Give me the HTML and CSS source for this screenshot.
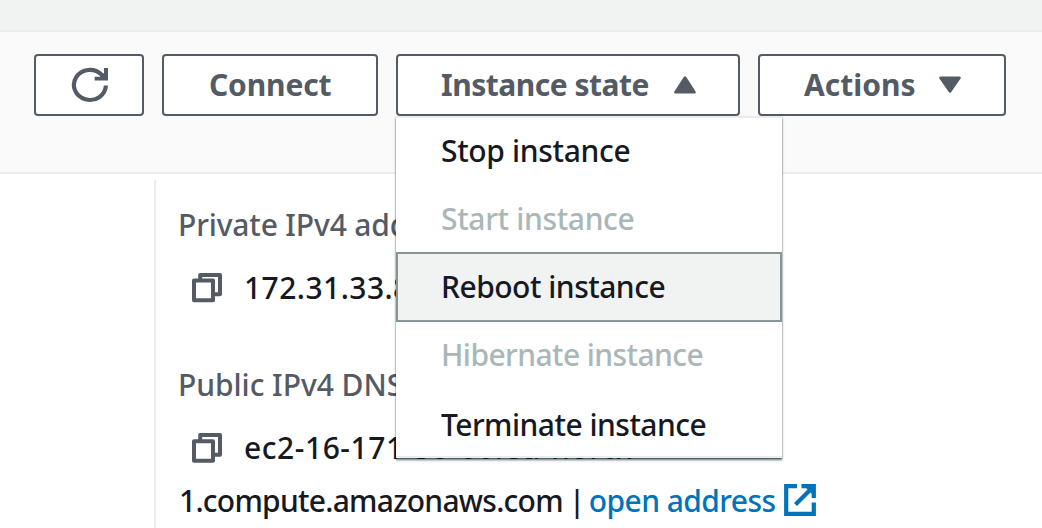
FILE: index.html
```html
<!DOCTYPE html>
<html lang="en">
<head>
<meta charset="utf-8">
<title>Instance summary</title>
<link rel="stylesheet" href="styles.css">
</head>
<body>
<div class="topband"></div>
<header class="toolbar">
  <button class="btn btn-refresh" aria-label="Refresh">
    <svg width="38" height="36" viewBox="0 0 38 36" fill="none" stroke="currentColor" stroke-width="4.2"><path d="M34.9 18.5A16 15 0 1 1 30.4 7.5L34 11"/><path d="M37 1V13.6H23.6V9.8H29L33 6V1Z" fill="currentColor" stroke="none"/></svg>
  </button>
  <button class="btn btn-connect"><span class="t-connect">Connect</span></button>
  <div class="dropdown">
    <button class="btn btn-state"><span class="t-state">Instance state</span>
      <svg class="caret" width="24" height="20" viewBox="0 0 24 20"><path d="M12 2.5 21.5 17.2H2.5Z" fill="currentColor" stroke="currentColor" stroke-width="2.6" stroke-linejoin="round"/></svg>
    </button>
    <ul class="menu">
      <li class="item item-stop"><span class="t-stop">Stop instance</span></li>
      <li class="item item-start disabled"><span class="t-start">Start instance</span></li>
      <li class="item active"><span class="t-reboot">Reboot instance</span></li>
      <li class="item item-hib disabled"><span class="t-hib">Hibernate instance</span></li>
      <li class="item item-term"><span class="t-term">Terminate instance</span></li>
    </ul>
  </div>
  <button class="btn btn-actions"><span class="t-actions">Actions</span>
    <svg class="caret" width="24" height="20" viewBox="0 0 24 20"><path d="M12 16.5 21.5 2.8H2.5Z" fill="currentColor" stroke="currentColor" stroke-width="2.6" stroke-linejoin="round"/></svg>
  </button>
</header>
<main class="details">
  <section class="column">
    <div class="label"><span class="t-priv">Private IPv4 addresses</span></div>
    <div class="value">
      <svg class="copy" width="32" height="32" viewBox="0 0 32 32" fill="none" stroke="currentColor" stroke-width="4" stroke-linejoin="round"><path d="M3 8.6H22V28.2H3ZM9.2 8V3H29V22.2H23"/></svg>
      <span class="t-ip">172.31.33.84</span>
    </div>
    <div class="label label-dns"><span class="t-pub">Public IPv4 DNS</span></div>
    <div class="value">
      <svg class="copy" width="32" height="32" viewBox="0 0 32 32" fill="none" stroke="currentColor" stroke-width="4" stroke-linejoin="round"><path d="M3 9.2H22V28.8H3ZM9.2 8V3H29V22.8H23"/></svg>
      <span class="t-ec2">ec2-16-171-38-60.eu-north-</span>
    </div>
    <div class="value value-end">
      <span class="t-host">1.compute.amazonaws.com</span><span class="bar">|</span><a class="link"><span class="t-open">open address</span><svg class="external" width="32" height="32" viewBox="0 0 32 32" fill="none" stroke="currentColor" stroke-width="4.2"><path d="M13 2.2H2.2V29.8H29.8V18.5M17.5 2.2H29.8V14M29 3 11.5 20.5"/><path d="M20 2H30V12Z" fill="currentColor" stroke="none"/></svg></a>
    </div>
  </section>
</main>
</body>
</html>
```
FILE: styles.css
```css
* { box-sizing: border-box; }
body {
  margin: 0;
  height: 528px;
  overflow: hidden;
  background: #fff;
  color: #16191f;
  font: 500 30px/40px "Noto Sans", "Open Sans", sans-serif;
  white-space: nowrap;
}
.topband { height: 32px; background: #f0f3f2; border-bottom: 2px solid #eaeded; }
.toolbar {
  display: flex;
  gap: 18px;
  height: 142px;
  padding: 22px 0 0 34px;
  background: #fafafa;
  border-bottom: 2px solid #eaeded;
}
.btn {
  display: flex;
  align-items: center;
  height: 62px;
  padding: 0;
  border: 2px solid #545b64;
  border-radius: 4px;
  background: #fff;
  color: #545b64;
  font: 700 30px/40px "Noto Sans", "Open Sans", sans-serif;
}
.btn-refresh { width: 110px; padding-left: 35px; }
.btn-connect { width: 216px; padding-left: 45px; }
.btn-state { width: 344px; padding-left: 43px; }
.btn-actions { width: 248px; padding-left: 44px; }
.btn-state .caret { margin: 0 41px 0 auto; }
.btn-actions .caret { margin: 0 42px 0 auto; }
.dropdown { position: relative; }
.menu {
  position: absolute;
  z-index: 2;
  top: 62px;
  left: 0;
  width: 386px;
  margin: 0;
  padding: 0;
  list-style: none;
  background: #fff;
  border-top: 2px solid #eaeded;
  border-bottom: 2px solid #eaeded;
  box-shadow: 0 2px 2px rgba(0, 28, 36, .5), 0 1px 1px rgba(0, 28, 36, .3), 0 2px 3px rgba(0, 28, 36, .15);
}
.item { display: flex; align-items: center; height: 67px; padding-left: 45px; }
.item-stop, .item-hib { padding-bottom: 2px; }
.item-term { padding-top: 4px; }
.disabled { color: #aab7b8; }
.active { height: 70px; padding-left: 43px; border: 2px solid #879596; background: #f0f3f2; }
.details { padding: 6px 0 0 154px; }
.column { height: 348px; padding: 25px 0 0 22px; border-left: 2px solid #eaeded; }
.label { color: #545b64; }
.value { display: flex; align-items: center; margin-top: 23px; }
.label-dns { margin-top: 57px; }
.copy { margin: 0 21px 0 13px; color: #545b64; }
.value-end { margin-top: 13px; padding-left: 1px; }
.bar { width: 13px; margin: 0 7px 0 6px; text-align: center; }
.link { display: flex; align-items: center; gap: 9px; color: #0073bb; }
.external { margin-bottom: 2px; }

/* Tracking per string */
.t-connect { letter-spacing: -.15px; }
.t-state { letter-spacing: -.5px; }
.t-stop, .t-start { letter-spacing: -.33px; }
.t-reboot { letter-spacing: -.5px; }
.t-hib { letter-spacing: -.57px; }
.t-term { letter-spacing: -.52px; }
.t-priv { letter-spacing: -.15px; }
.t-pub { letter-spacing: -.05px; }
.t-ip { letter-spacing: .45px; }
.t-ec2 { letter-spacing: .55px; }
.t-host { letter-spacing: -.74px; }
.t-open { letter-spacing: -.58px; }
```
